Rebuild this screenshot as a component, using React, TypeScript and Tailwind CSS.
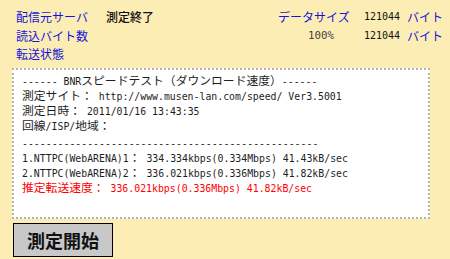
const jp = "font-['Noto_Sans_CJK_JP',sans-serif]";
const mono = "font-['DejaVu_Sans_Mono','Noto_Sans_CJK_JP',monospace]";

const results = [
  "------ BNRスピードテスト（ダウンロード速度）------",
  "測定サイト： http://www.musen-lan.com/speed/ Ver3.5001",
  "測定日時： 2011/01/16 13:43:35",
  "回線/ISP/地域：",
  "--------------------------------------------------",
  "1.NTTPC(WebARENA)1： 334.334kbps(0.334Mbps) 41.43kB/sec",
  "2.NTTPC(WebARENA)2： 336.021kbps(0.336Mbps) 41.82kB/sec",
];

// full-width runs get a larger size so they take ~2 ascii cells
const Line = ({ text }: { text: string }) => (
  <>
    {text.split(/([^\x00-\x7F]+)/).map((part, i) =>
      /[^\x00-\x7F]/.test(part) ? (
        <span key={i} className="text-[11.8px]">{part}</span>
      ) : (
        <span key={i}>{part}</span>
      )
    )}
  </>
);

export default function App() {
  return (
    <div className={`w-[450px] h-[259px] overflow-hidden bg-[#fcedb5] ${jp}`}>
      <div className="pt-2 pl-4 text-[12px] leading-[17px] flex flex-col gap-[1px]">
        <div className="flex h-[17px]">
          <span className="w-[90px] text-[#1414dc]">配信元サーバ</span>
          <span className="w-[172px] text-[#111] font-medium">測定終了</span>
          <span className="w-[86px] text-[#1414dc]">データサイズ</span>
          <span className={`w-[43px] text-[10px] text-[#111] ${mono}`}>121044</span>
          <span className="text-[#1414dc]">バイト</span>
        </div>
        <div className="flex h-[17px] mt-[1px]">
          <span className="w-[292px] text-[#1414dc]">読込バイト数</span>
          <span className={`w-[56px] text-[10.8px] text-[#444] ${mono}`}>100%</span>
          <span className={`w-[43px] text-[10px] text-[#111] ${mono}`}>121044</span>
          <span className="text-[#1414dc]">バイト</span>
        </div>
        <div className="h-[17px] text-[#1414dc]">転送状態</div>
      </div>

      <div className="ml-3 mt-[6px] w-[418px] h-[151px] bg-white border-2 border-dotted border-[#b8b4a8] pl-[8px] pt-[4px]">
        <div className={`text-[9.85px] leading-[14px] text-[#1e1e1e] whitespace-pre ${mono}`}>
          {results.map((line, i) => (
            <div key={i} className={i === 4 ? "mt-[3px]" : ""}>
              <Line text={line} />
            </div>
          ))}
          <div className="text-[#ff0000]">
            <Line text="推定転送速度： 336.021kbps(0.336Mbps) 41.82kB/sec" />
          </div>
        </div>
      </div>

      <button className="ml-[13px] mt-[4px] w-[100px] h-[34px] bg-[#c8c8c8] border border-black text-[18px] font-semibold text-[#111] leading-none">
        測定開始
      </button>
    </div>
  );
}
